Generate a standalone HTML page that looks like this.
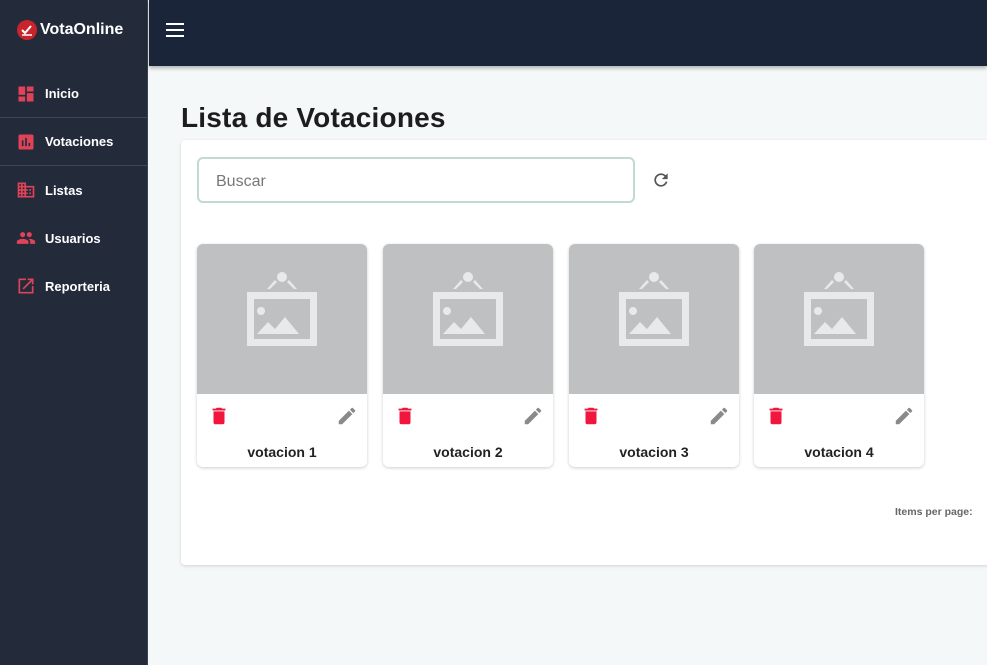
<!DOCTYPE html>
<html><head><meta charset="utf-8"><style>
*{margin:0;padding:0;box-sizing:border-box}
body{width:987px;height:665px;overflow:hidden;font-family:"Liberation Sans",sans-serif;background:#f4f8f8;position:relative}
.side{position:absolute;left:0;top:0;width:148px;height:665px;background:#232b3b;border-right:1px solid #3a4252}
.logo{position:absolute;left:17px;top:20px;display:flex;align-items:center;color:#fff;font-weight:bold;font-size:16px}
.logo .c{width:20px;height:20px;border-radius:50%;background:#c8242c;margin-right:3px;position:relative}
.nav{position:absolute;top:70px;left:0;width:148px}
.item{height:48px;display:flex;align-items:center;padding-left:16px;color:#fff;font-weight:bold;font-size:13px}
.item.b{border-bottom:1px solid #3e4656}
.item svg{width:20px;height:20px;margin-right:9px}
.top{position:absolute;left:149px;top:0;right:0;height:66px;background:#1b2539;box-shadow:0 2px 4px rgba(0,0,0,.3)}
.ham{position:absolute;left:17px;top:23px;width:18px}
.ham i{display:block;height:2px;background:#fff;margin-bottom:4px}
h1{position:absolute;left:181px;top:102px;font-size:28px;color:#1d1d1d;font-weight:bold;letter-spacing:0.2px}
.panel{position:absolute;left:181px;top:140px;width:820px;height:425px;background:#fff;border-radius:4px;box-shadow:0 1px 3px rgba(0,0,0,.15)}
.search{position:absolute;left:16px;top:17px;width:438px;height:46px;border:2px solid #c3d8d3;border-radius:6px;font-size:16px;color:#777;padding:14px 0 0 17px}
.ref{position:absolute;left:470px;top:30px}
.card{position:absolute;top:104px;width:170px;height:223px;border-radius:6px;background:#fff;box-shadow:0 1px 3px rgba(0,0,0,.2);overflow:hidden}
.img{height:150px;background:#bfc0c2;position:relative}
.card .t{position:absolute;top:200px;width:100%;text-align:center;font-weight:bold;font-size:14px;color:#222}
.ipp{position:absolute;left:714px;top:366px;font-size:10.5px;font-weight:bold;color:#666}
</style></head><body>
<div class="side">
<div class="logo"><div class="c"><svg width="20" height="20" viewBox="0 0 20 20"><path d="M5 10l3 3 6-7" stroke="#fff" stroke-width="2" fill="none"/><path d="M5 15h10" stroke="#fff" stroke-width="1.5"/></svg></div>VotaOnline</div>
<div class="nav">
<div class="item b"><svg viewBox="0 0 24 24"><path fill="#e04257" d="M3 13h8V3H3zm0 8h8v-6H3zm10 0h8V11h-8zm0-18v6h8V3z"/></svg>Inicio</div>
<div class="item b"><svg viewBox="0 0 24 24"><path fill="#e04257" d="M19 3H5a2 2 0 0 0-2 2v14a2 2 0 0 0 2 2h14a2 2 0 0 0 2-2V5a2 2 0 0 0-2-2zM9 17H7v-7h2zm4 0h-2V7h2zm4 0h-2v-4h2z"/></svg>Votaciones</div>
<div class="item"><svg viewBox="0 0 24 24"><path fill="#e04257" d="M12 7V3H2v18h20V7zM6 19H4v-2h2zm0-4H4v-2h2zm0-4H4V9h2zm0-4H4V5h2zm4 12H8v-2h2zm0-4H8v-2h2zm0-4H8V9h2zm0-4H8V5h2zm10 12h-8v-2h2v-2h-2v-2h2v-2h-2V9h8zm-2-8h-2v2h2zm0 4h-2v2h2z"/></svg>Listas</div>
<div class="item"><svg viewBox="0 0 24 24"><path fill="#e04257" d="M16 11c1.66 0 3-1.34 3-3s-1.34-3-3-3-3 1.34-3 3 1.34 3 3 3zm-8 0c1.66 0 3-1.34 3-3S9.66 5 8 5 5 6.34 5 8s1.34 3 3 3zm0 2c-2.330 0-7 1.17-7 3.5V19h14v-2.5c0-2.33-4.67-3.5-7-3.5zm8 0c-.29 0-.62.02-.97.05 1.16.84 1.970 1.97 1.97 3.45V19h6v-2.5c0-2.33-4.67-3.5-7-3.5z"/></svg>Usuarios</div>
<div class="item"><svg viewBox="0 0 24 24"><path fill="#e04257" d="M19 19H5V5h7V3H3v18h18v-9h-2zM14 3v2h3.59l-9.83 9.83 1.41 1.41L19 6.41V10h2V3z"/></svg>Reporteria</div>
</div></div>
<div class="top"><div class="ham"><i></i><i></i><i></i></div></div>
<h1>Lista de Votaciones</h1>
<div class="panel">
<div class="search">Buscar</div>
<svg class="ref" width="20" height="20" viewBox="0 0 24 24"><path fill="#555" d="M17.65 6.35A7.96 7.96 0 0 0 12 4a8 8 0 1 0 7.73 10h-2.08A6 6 0 1 1 12 6c1.66 0 3.14.69 4.22 1.78L13 11h7V4z"/></svg>
<div class="card" style="left:16px"><div class="img"><svg width="170" height="150"><g fill="#e8e9eb"><circle cx="85" cy="33" r="5"/><path d="M78 36l-8 9h3l7-7zM92 36l8 9h-3l-7-7z"/><path d="M50 48h70v54H50zM57 55v40h56V55z" fill-rule="evenodd"/><circle cx="64" cy="67" r="4"/><path d="M60 90l11-12 7 7 10-12 14 17z"/></g></svg></div>
<svg style="position:absolute;left:11px;top:160px" width="22" height="24" viewBox="0 0 24 24"><path fill="#f0163e" d="M6 19a2 2 0 0 0 2 2h8a2 2 0 0 0 2-2V7H6zM19 4h-3.5l-1-1h-5l-1 1H5v2h14z"/></svg>
<svg style="position:absolute;left:139px;top:161px" width="22" height="22" viewBox="0 0 24 24"><path fill="#8a8a8a" d="M3 17.25V21h3.75L17.81 9.94l-3.75-3.75zM20.71 7.04a1 1 0 0 0 0-1.41l-2.34-2.34a1 1 0 0 0-1.41 0l-1.83 1.83 3.750 3.75z"/></svg>
<div class="t">votacion 1</div></div>
<div class="card" style="left:202px"><div class="img"><svg width="170" height="150"><g fill="#e8e9eb"><circle cx="85" cy="33" r="5"/><path d="M78 36l-8 9h3l7-7zM92 36l8 9h-3l-7-7z"/><path d="M50 48h70v54H50zM57 55v40h56V55z" fill-rule="evenodd"/><circle cx="64" cy="67" r="4"/><path d="M60 90l11-12 7 7 10-12 14 17z"/></g></svg></div>
<svg style="position:absolute;left:11px;top:160px" width="22" height="24" viewBox="0 0 24 24"><path fill="#f0163e" d="M6 19a2 2 0 0 0 2 2h8a2 2 0 0 0 2-2V7H6zM19 4h-3.5l-1-1h-5l-1 1H5v2h14z"/></svg>
<svg style="position:absolute;left:139px;top:161px" width="22" height="22" viewBox="0 0 24 24"><path fill="#8a8a8a" d="M3 17.25V21h3.75L17.81 9.94l-3.75-3.75zM20.71 7.04a1 1 0 0 0 0-1.41l-2.34-2.34a1 1 0 0 0-1.41 0l-1.83 1.83 3.75 3.75z"/></svg>
<div class="t">votacion 2</div></div>
<div class="card" style="left:388px"><div class="img"><svg width="170" height="150"><g fill="#e8e9eb"><circle cx="85" cy="33" r="5"/><path d="M78 36l-8 9h3l7-7zM92 36l8 9h-3l-7-7z"/><path d="M50 48h70v54H50zM57 55v40h56V55z" fill-rule="evenodd"/><circle cx="64" cy="67" r="4"/><path d="M60 90l11-12 7 7 10-12 14 17z"/></g></svg></div>
<svg style="position:absolute;left:11px;top:160px" width="22" height="24" viewBox="0 0 24 24"><path fill="#f0163e" d="M6 19a2 2 0 0 0 2 2h8a2 2 0 0 0 2-2V7H6zM19 4h-3.5l-1-1h-5l-1 1H5v2h14z"/></svg>
<svg style="position:absolute;left:139px;top:161px" width="22" height="22" viewBox="0 0 24 24"><path fill="#8a8a8a" d="M3 17.25V21h3.75L17.81 9.94l-3.75-3.75zM20.71 7.04a1 1 0 0 0 0-1.41l-2.34-2.34a1 1 0 0 0-1.41 0l-1.83 1.83 3.75 3.75z"/></svg>
<div class="t">votacion 3</div></div>
<div class="card" style="left:573px"><div class="img"><svg width="170" height="150"><g fill="#e8e9eb"><circle cx="85" cy="33" r="5"/><path d="M78 36l-8 9h3l7-7zM92 36l8 9h-3l-7-7z"/><path d="M50 48h70v54H50zM57 55v40h56V55z" fill-rule="evenodd"/><circle cx="64" cy="67" r="4"/><path d="M60 90l11-12 7 7 10-12 14 17z"/></g></svg></div>
<svg style="position:absolute;left:11px;top:160px" width="22" height="24" viewBox="0 0 24 24"><path fill="#f0163e" d="M6 19a2 2 0 0 0 2 2h8a2 2 0 0 0 2-2V7H6zM19 4h-3.5l-1-1h-5l-1 1H5v2h14z"/></svg>
<svg style="position:absolute;left:139px;top:161px" width="22" height="22" viewBox="0 0 24 24"><path fill="#8a8a8a" d="M3 17.25V21h3.75L17.81 9.94l-3.75-3.75zM20.71 7.04a1 1 0 0 0 0-1.41l-2.34-2.34a1 1 0 0 0-1.41 0l-1.83 1.83 3.75 3.75z"/></svg>
<div class="t">votacion 4</div></div>
<div class="ipp">Items per page:</div>
</div>
</body></html>
